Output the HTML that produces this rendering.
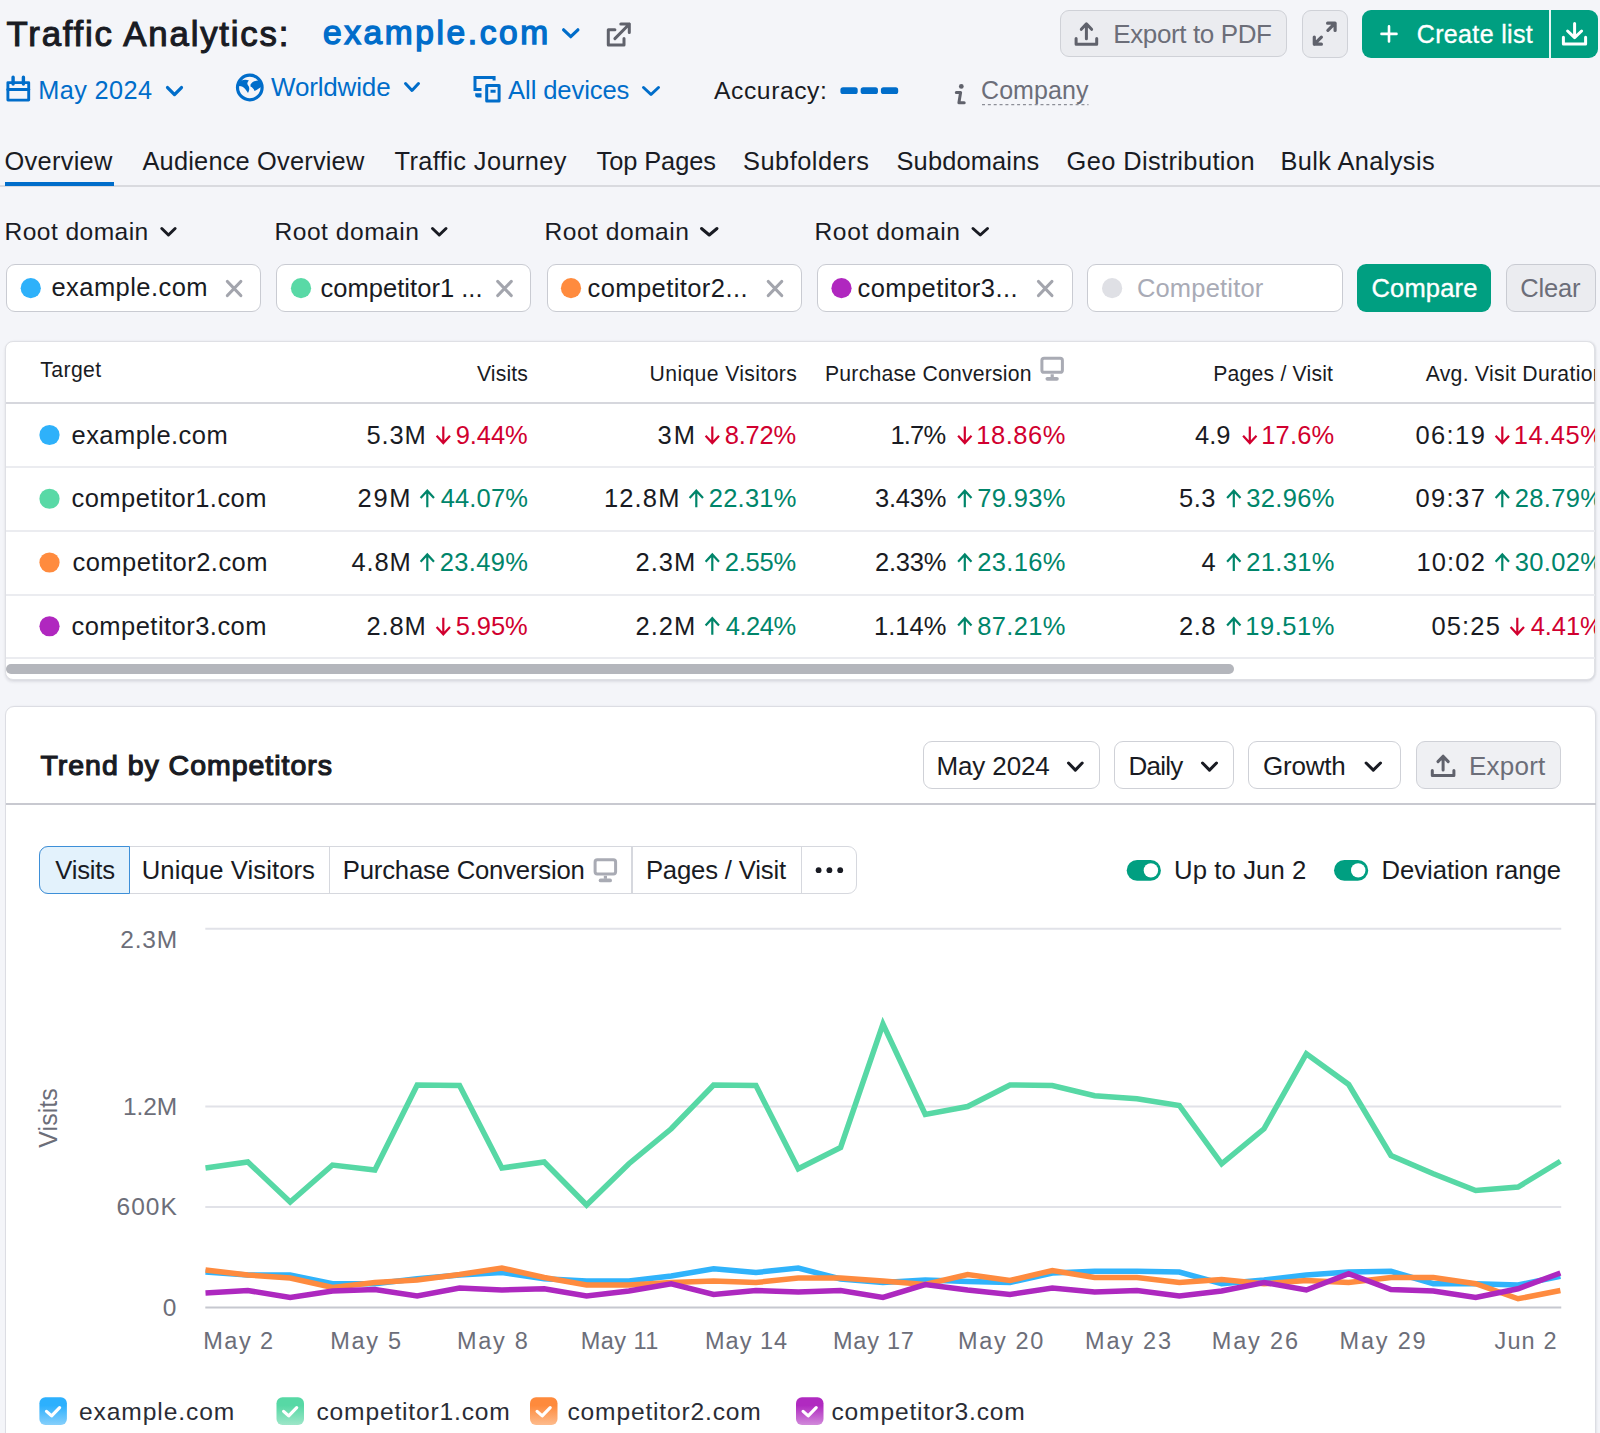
<!DOCTYPE html>
<html><head><meta charset="utf-8"><title>Traffic Analytics</title>
<style>
html,body{margin:0;padding:0}
body{width:1600px;height:1433px;overflow:hidden;background:#f4f5f9;position:relative;font-family:'Liberation Sans', sans-serif}
.t{position:absolute;white-space:nowrap;line-height:1;font-family:'Liberation Sans', sans-serif}
.a{position:absolute;box-sizing:border-box}
</style></head><body>
<div class="a" style="left:1059.60px;top:10.30px;width:227.60px;height:47.10px;background:#ebecf0;border:1.5px solid #cfd1d7;border-radius:9px"></div>
<div class="a" style="left:1302.00px;top:10.00px;width:45.80px;height:47.70px;background:#ebecf0;border:1.5px solid #cfd1d7;border-radius:9px"></div>
<div class="a" style="left:1362.25px;top:9.80px;width:235.45px;height:48.00px;background:#009f81;border-radius:9px"></div>
<div class="a" style="left:1548.70px;top:9.80px;width:2.20px;height:48.00px;background:#ffffff;opacity:.9"></div>
<div class="a" style="left:0.00px;top:185.25px;width:1600.00px;height:1.50px;background:#d9dadf"></div>
<div class="a" style="left:5.00px;top:182.00px;width:109.00px;height:4.25px;background:#006dca"></div>
<div class="a" style="left:5.60px;top:264.40px;width:255.00px;height:47.30px;background:#fff;border:1.5px solid #c9cbd2;border-radius:9px"></div>
<div class="a" style="left:275.60px;top:264.40px;width:255.40px;height:47.30px;background:#fff;border:1.5px solid #c9cbd2;border-radius:9px"></div>
<div class="a" style="left:546.50px;top:264.40px;width:255.50px;height:47.30px;background:#fff;border:1.5px solid #c9cbd2;border-radius:9px"></div>
<div class="a" style="left:816.50px;top:264.40px;width:256.00px;height:47.30px;background:#fff;border:1.5px solid #c9cbd2;border-radius:9px"></div>
<div class="a" style="left:1086.50px;top:264.40px;width:256.10px;height:47.30px;background:#fff;border:1.5px solid #c9cbd2;border-radius:9px"></div>
<div class="a" style="left:1357.00px;top:264.20px;width:134.00px;height:47.80px;background:#009f81;border-radius:9px"></div>
<div class="a" style="left:1505.75px;top:264.20px;width:89.75px;height:47.80px;background:#ebecf0;border:1.5px solid #c9cbd2;border-radius:9px"></div>
<div class="a" style="left:4.50px;top:340.80px;width:1590.80px;height:339.00px;background:#fff;border:1.5px solid #dfe0e5;border-radius:8px;box-shadow:0 2px 3px rgba(30,32,45,.10), 1px 0 2px rgba(30,32,45,.08)"></div>
<div class="a" style="left:6.00px;top:402.00px;width:1589.00px;height:2.00px;background:#d6d7dd"></div>
<div class="a" style="left:6.00px;top:466.00px;width:1589.00px;height:2.00px;background:#ebecf0"></div>
<div class="a" style="left:6.00px;top:529.80px;width:1589.00px;height:2.00px;background:#ebecf0"></div>
<div class="a" style="left:6.00px;top:593.60px;width:1589.00px;height:2.00px;background:#ebecf0"></div>
<div class="a" style="left:6.00px;top:657.40px;width:1589.00px;height:2.00px;background:#ebecf0"></div>
<div class="a" style="left:5.50px;top:663.75px;width:1228.90px;height:9.75px;background:#b4b6bc;border-radius:5px"></div>
<div class="a" style="left:4.50px;top:706.30px;width:1591.80px;height:793.70px;background:#fff;border:1.5px solid #dcdde3;border-radius:9px;box-shadow:1px 0 2px rgba(30,32,45,.08)"></div>
<div class="a" style="left:6.00px;top:803.00px;width:1589.50px;height:2.20px;background:#c8c9d0"></div>
<div class="a" style="left:922.70px;top:741.00px;width:177.30px;height:48.00px;background:#fff;border:1.5px solid #cfd1d7;border-radius:9px"></div>
<div class="a" style="left:1114.40px;top:741.00px;width:119.40px;height:48.00px;background:#fff;border:1.5px solid #cfd1d7;border-radius:9px"></div>
<div class="a" style="left:1248.20px;top:741.00px;width:153.10px;height:48.00px;background:#fff;border:1.5px solid #cfd1d7;border-radius:9px"></div>
<div class="a" style="left:1416.00px;top:741.00px;width:144.50px;height:48.00px;background:#eff0f3;border:1.5px solid #cfd1d7;border-radius:9px"></div>
<div class="a" style="left:39.10px;top:846.30px;width:818.30px;height:47.80px;background:#fff;border:1.5px solid #d6d8de;border-radius:9px"></div>
<div class="a" style="left:39.10px;top:846.30px;width:91.40px;height:47.80px;background:#e3f2fc;border:1.5px solid #3d8fd8;border-radius:9px 0 0 9px"></div>
<div class="a" style="left:328.55px;top:847.00px;width:1.50px;height:46.50px;background:#d6d8de"></div>
<div class="a" style="left:631.25px;top:847.00px;width:1.50px;height:46.50px;background:#d6d8de"></div>
<div class="a" style="left:800.95px;top:847.00px;width:1.50px;height:46.50px;background:#d6d8de"></div>
<svg class="a" style="left:0;top:0" width="1600" height="1433" viewBox="0 0 1600 1433"><polyline points="563.60,29.80 570.75,36.70 577.90,29.80" fill="none" stroke="#006dca" stroke-width="3.2" stroke-linecap="round" stroke-linejoin="round" /><path d="M614.9,29.7 H608.3 V45 H624 V38.4" fill="none" stroke="#60626c" stroke-width="3" stroke-linecap="round" stroke-linejoin="round"/><path d="M614.9,38.6 L629.4,24 M620.8,23.9 H629.3 V32.4" fill="none" stroke="#60626c" stroke-width="3" stroke-linecap="round" stroke-linejoin="round"/><path d="M7.9,82.6 H28.7 V100.1 H7.9 Z" fill="none" stroke="#006dca" stroke-width="2.9" stroke-linecap="round" stroke-linejoin="round"/><path d="M7.9,89.4 H28.7" fill="none" stroke="#006dca" stroke-width="3" stroke-linecap="round" stroke-linejoin="round"/><path d="M13.1,77.2 V84 M23.4,77.2 V84" fill="none" stroke="#006dca" stroke-width="3.4" stroke-linecap="round" stroke-linejoin="round"/><circle cx="249.8" cy="87.5" r="12.3" fill="none" stroke="#006dca" stroke-width="3.2"/><path d="M241.5,80.5 C244,79.5 247,79.8 249,80.5 C247.5,82 246.8,83.3 247.8,85 C249.5,87 250,89.5 248,93 C246.5,91 245,88 242,86.5 C240,85.5 238.5,86 238,86.5 C238.5,84 239.5,82 241.5,80.5 Z" fill="#006dca"/><path d="M250.5,84.5 C252,82 255,80.5 258.5,80.5 C260.5,82.5 261.5,84.5 261.5,86.5 C259.5,88 257.5,89.5 254.5,91 C254,89 252.5,87.5 250.5,86.5 Z" fill="#006dca"/><path d="M494.1,80.6 V77.4 H475 V89.4 H481.5" fill="none" stroke="#006dca" stroke-width="3" stroke-linecap="butt" stroke-linejoin="miter"/><path d="M475.2,93.2 H481.5 V97.6 H477.5 Q475.2,97.6 475.2,95.3 Z" fill="#006dca"/><path d="M486.7,85.6 H499.1 V101 H486.7 Z" fill="none" stroke="#006dca" stroke-width="3" stroke-linecap="round" stroke-linejoin="round"/><rect x="490.5" y="89.75" width="5.1" height="3" fill="#006dca"/><polyline points="167.55,87.55 174.50,94.60 181.45,87.55" fill="none" stroke="#006dca" stroke-width="3.3" stroke-linecap="round" stroke-linejoin="round" /><polyline points="405.50,83.50 412.00,90.50 418.50,83.50" fill="none" stroke="#006dca" stroke-width="3" stroke-linecap="round" stroke-linejoin="round" /><polyline points="643.50,87.50 651.00,94.50 658.50,87.50" fill="none" stroke="#006dca" stroke-width="3" stroke-linecap="round" stroke-linejoin="round" /><rect x="840.4" y="87.3" width="17.3" height="6.7" rx="2.6" fill="#006dca"/><rect x="860.65" y="87.3" width="17.3" height="6.7" rx="2.6" fill="#006dca"/><rect x="880.9" y="87.3" width="17.3" height="6.7" rx="2.6" fill="#006dca"/><circle cx="961.3" cy="86.4" r="2.4" fill="#60626c"/><path d="M956.3,92.4 H960.6 L958.9,102.7 H964.2" fill="none" stroke="#60626c" stroke-width="3" stroke-linecap="round" stroke-linejoin="round"/><line x1="982" y1="104.6" x2="1088.5" y2="104.6" stroke="#8d8f98" stroke-width="1.4" stroke-dasharray="3 2.85"/><path d="M1086.4,24 V38.8 M1081.3,29.3 L1086.4,23.9 L1091.6,29.3" fill="none" stroke="#60626c" stroke-width="3" stroke-linecap="round" stroke-linejoin="round"/><path d="M1076.1,38.4 V44.2 H1096.7 V38.4" fill="none" stroke="#60626c" stroke-width="3" stroke-linecap="round" stroke-linejoin="round"/><path d="M1327.6,23.2 H1335.1 V30.5 M1335.1,23.2 L1327.9,30.4" fill="none" stroke="#60626c" stroke-width="3.2" stroke-linecap="round" stroke-linejoin="round"/><path d="M1321.4,37.1 L1314.3,44.2 M1314.3,37.1 V44.2 H1321.4" fill="none" stroke="#60626c" stroke-width="3.2" stroke-linecap="round" stroke-linejoin="round"/><path d="M1381.5,33.9 H1396.5 M1389,26.4 V41.4" fill="none" stroke="#fff" stroke-width="2.6" stroke-linecap="round" stroke-linejoin="round"/><path d="M1574.6,23.5 V37 M1567.6,31 L1574.6,37.6 L1581.6,31" fill="none" stroke="#fff" stroke-width="3" stroke-linecap="round" stroke-linejoin="round"/><path d="M1563.4,37.2 V44 H1585.6 V37.2" fill="none" stroke="#fff" stroke-width="3" stroke-linecap="round" stroke-linejoin="round"/><polyline points="161.80,228.50 168.45,235.00 175.10,228.50" fill="none" stroke="#191b23" stroke-width="3" stroke-linecap="round" stroke-linejoin="round" /><polyline points="432.50,228.50 439.25,235.00 446.00,228.50" fill="none" stroke="#191b23" stroke-width="3" stroke-linecap="round" stroke-linejoin="round" /><polyline points="701.50,228.50 709.25,235.00 717.00,228.50" fill="none" stroke="#191b23" stroke-width="3" stroke-linecap="round" stroke-linejoin="round" /><polyline points="973.00,228.50 980.25,235.00 987.50,228.50" fill="none" stroke="#191b23" stroke-width="3" stroke-linecap="round" stroke-linejoin="round" /><circle cx="30.75" cy="288.2" r="10.1" fill="#2eb1fa"/><path d="M227.4,281.5 L240.79999999999998,295.5 M240.79999999999998,281.5 L227.4,295.5" fill="none" stroke="#a3a5ad" stroke-width="3.2" stroke-linecap="round" stroke-linejoin="round"/><circle cx="301" cy="288.2" r="10.1" fill="#59d9a6"/><path d="M497.8,281.5 L511.2,295.5 M511.2,281.5 L497.8,295.5" fill="none" stroke="#a3a5ad" stroke-width="3.2" stroke-linecap="round" stroke-linejoin="round"/><circle cx="571" cy="288.2" r="10.1" fill="#ff8b3e"/><path d="M768.3,281.5 L781.7,295.5 M781.7,281.5 L768.3,295.5" fill="none" stroke="#a3a5ad" stroke-width="3.2" stroke-linecap="round" stroke-linejoin="round"/><circle cx="841.5" cy="288.2" r="10.1" fill="#b027bf"/><path d="M1038.5,281.5 L1051.9,295.5 M1051.9,281.5 L1038.5,295.5" fill="none" stroke="#a3a5ad" stroke-width="3.2" stroke-linecap="round" stroke-linejoin="round"/><circle cx="1112.1" cy="288.2" r="10.1" fill="#dfe0e5"/><rect x="1041.9" y="358.25" width="20.5" height="14.1" rx="2.2" fill="none" stroke="#a9abb4" stroke-width="3"/><rect x="1050.6000000000001" y="374.25" width="3.2" height="3" fill="#a9abb4"/><rect x="1045.5" y="376.95" width="13.3" height="3.8" rx="1.9" fill="#a9abb4"/><rect x="595.1" y="859.8" width="20.5" height="14.1" rx="2.2" fill="none" stroke="#a9abb4" stroke-width="3"/><rect x="603.8000000000001" y="875.8" width="3.2" height="3" fill="#a9abb4"/><rect x="598.7" y="878.5" width="13.3" height="3.8" rx="1.9" fill="#a9abb4"/><circle cx="49.5" cy="435.00" r="10.1" fill="#2eb1fa"/><circle cx="49.5" cy="498.75" r="10.1" fill="#59d9a6"/><circle cx="49.5" cy="562.50" r="10.1" fill="#ff8b3e"/><circle cx="49.5" cy="626.25" r="10.1" fill="#b027bf"/><polyline points="1068.50,763.00 1075.35,770.10 1082.20,763.00" fill="none" stroke="#191b23" stroke-width="3" stroke-linecap="round" stroke-linejoin="round" /><polyline points="1202.50,763.00 1209.50,770.10 1216.50,763.00" fill="none" stroke="#191b23" stroke-width="3" stroke-linecap="round" stroke-linejoin="round" /><polyline points="1366.10,763.00 1373.30,770.10 1380.50,763.00" fill="none" stroke="#191b23" stroke-width="3" stroke-linecap="round" stroke-linejoin="round" /><path d="M1443.1,757 V770 M1438,761.6 L1443.1,756.2 L1448.2,761.6" fill="none" stroke="#60626c" stroke-width="3" stroke-linecap="round" stroke-linejoin="round"/><path d="M1432.3,770.5 V775.4 H1453.9 V770.5" fill="none" stroke="#60626c" stroke-width="3" stroke-linecap="round" stroke-linejoin="round"/><circle cx="818.6" cy="870.2" r="2.9" fill="#191b23"/><circle cx="829.4" cy="870.2" r="2.9" fill="#191b23"/><circle cx="840.2" cy="870.2" r="2.9" fill="#191b23"/><rect x="1126.7" y="860" width="34.2" height="20.8" rx="10.4" fill="#009f81"/><circle cx="1150.9" cy="870.4" r="7.2" fill="#fff"/><rect x="1334" y="860" width="34.2" height="20.8" rx="10.4" fill="#009f81"/><circle cx="1358.2" cy="870.4" r="7.2" fill="#fff"/><line x1="205.3" y1="928.75" x2="1561.25" y2="928.75" stroke="#e1e2e8" stroke-width="1.8"/><line x1="205.3" y1="1106.5" x2="1561.25" y2="1106.5" stroke="#e1e2e8" stroke-width="1.8"/><line x1="205.3" y1="1207" x2="1561.25" y2="1207" stroke="#e1e2e8" stroke-width="1.8"/><line x1="205.3" y1="1307.5" x2="1561.25" y2="1307.5" stroke="#c6c8cf" stroke-width="2"/><polyline points="205.50,1272.00 247.84,1275.00 290.18,1275.00 332.52,1283.75 374.86,1283.75 417.20,1278.75 459.54,1275.00 501.88,1272.50 544.22,1278.75 586.56,1281.00 628.90,1281.00 671.24,1276.00 713.58,1268.75 755.92,1272.50 798.26,1268.00 840.60,1279.00 882.94,1282.50 925.28,1280.00 967.62,1281.50 1009.96,1282.50 1052.30,1273.00 1094.64,1271.25 1136.98,1271.25 1179.32,1272.00 1221.66,1283.75 1264.00,1280.00 1306.34,1275.00 1348.68,1272.00 1391.02,1271.25 1433.36,1283.75 1475.70,1283.75 1518.04,1285.00 1560.38,1276.25" fill="none" stroke="#30b3fb" stroke-width="5.5" stroke-linecap="butt" stroke-linejoin="miter" stroke-miterlimit="3"/><polyline points="205.50,1168.00 247.84,1162.00 290.18,1202.00 332.52,1165.00 374.86,1170.00 417.20,1085.00 459.54,1085.50 501.88,1168.00 544.22,1162.00 586.56,1205.00 628.90,1163.75 671.24,1128.75 713.58,1085.00 755.92,1085.50 798.26,1168.75 840.60,1147.50 882.94,1024.00 925.28,1114.50 967.62,1106.50 1009.96,1085.00 1052.30,1085.50 1094.64,1095.75 1136.98,1098.75 1179.32,1105.50 1221.66,1163.75 1264.00,1128.75 1306.34,1053.75 1348.68,1084.50 1391.02,1155.50 1433.36,1173.75 1475.70,1190.50 1518.04,1187.00 1560.38,1161.25" fill="none" stroke="#57d8a5" stroke-width="5.5" stroke-linecap="butt" stroke-linejoin="miter" stroke-miterlimit="3"/><polyline points="205.50,1270.00 247.84,1275.00 290.18,1278.00 332.52,1287.50 374.86,1282.50 417.20,1280.00 459.54,1274.50 501.88,1268.00 544.22,1277.50 586.56,1285.00 628.90,1285.00 671.24,1282.50 713.58,1281.00 755.92,1282.50 798.26,1278.00 840.60,1278.00 882.94,1281.00 925.28,1284.50 967.62,1274.50 1009.96,1280.50 1052.30,1270.50 1094.64,1277.50 1136.98,1277.50 1179.32,1282.50 1221.66,1279.50 1264.00,1283.75 1306.34,1280.50 1348.68,1282.50 1391.02,1277.50 1433.36,1277.50 1475.70,1283.75 1518.04,1298.75 1560.38,1290.50" fill="none" stroke="#fe8b3f" stroke-width="5.5" stroke-linecap="butt" stroke-linejoin="miter" stroke-miterlimit="3"/><polyline points="205.50,1293.00 247.84,1290.50 290.18,1297.50 332.52,1291.00 374.86,1289.50 417.20,1296.00 459.54,1288.00 501.88,1290.00 544.22,1288.75 586.56,1296.00 628.90,1291.00 671.24,1283.75 713.58,1294.50 755.92,1290.50 798.26,1292.00 840.60,1290.50 882.94,1297.50 925.28,1284.50 967.62,1290.00 1009.96,1294.50 1052.30,1288.00 1094.64,1292.00 1136.98,1290.50 1179.32,1296.00 1221.66,1291.00 1264.00,1282.50 1306.34,1290.00 1348.68,1273.75 1391.02,1289.50 1433.36,1291.00 1475.70,1297.50 1518.04,1288.75 1560.38,1273.00" fill="none" stroke="#ad28bf" stroke-width="5.5" stroke-linecap="butt" stroke-linejoin="miter" stroke-miterlimit="3"/><path d="M443.3,426.40000000000003 V443.0 M436.6,435.70000000000005 L443.3,443.0 L450,435.70000000000005" fill="none" stroke="#d1002f" stroke-width="2.2" stroke-linecap="butt" stroke-linejoin="miter"/><path d="M712.3,426.40000000000003 V443.0 M705.6,435.70000000000005 L712.3,443.0 L719,435.70000000000005" fill="none" stroke="#d1002f" stroke-width="2.2" stroke-linecap="butt" stroke-linejoin="miter"/><path d="M964.8,426.40000000000003 V443.0 M958.1,435.70000000000005 L964.8,443.0 L971.5,435.70000000000005" fill="none" stroke="#d1002f" stroke-width="2.2" stroke-linecap="butt" stroke-linejoin="miter"/><path d="M1249.8,426.40000000000003 V443.0 M1243.1,435.70000000000005 L1249.8,443.0 L1256.5,435.70000000000005" fill="none" stroke="#d1002f" stroke-width="2.2" stroke-linecap="butt" stroke-linejoin="miter"/><path d="M1502.3,426.40000000000003 V443.0 M1495.6,435.70000000000005 L1502.3,443.0 L1509,435.70000000000005" fill="none" stroke="#d1002f" stroke-width="2.2" stroke-linecap="butt" stroke-linejoin="miter"/><path d="M427.3,507.35 V490.75 M420.6,498.05 L427.3,490.75 L434,498.05" fill="none" stroke="#00856a" stroke-width="2.2" stroke-linecap="butt" stroke-linejoin="miter"/><path d="M696.3,507.35 V490.75 M689.6,498.05 L696.3,490.75 L703,498.05" fill="none" stroke="#00856a" stroke-width="2.2" stroke-linecap="butt" stroke-linejoin="miter"/><path d="M964.8,507.35 V490.75 M958.1,498.05 L964.8,490.75 L971.5,498.05" fill="none" stroke="#00856a" stroke-width="2.2" stroke-linecap="butt" stroke-linejoin="miter"/><path d="M1233.8,507.35 V490.75 M1227.1,498.05 L1233.8,490.75 L1240.5,498.05" fill="none" stroke="#00856a" stroke-width="2.2" stroke-linecap="butt" stroke-linejoin="miter"/><path d="M1502.3,507.35 V490.75 M1495.6,498.05 L1502.3,490.75 L1509,498.05" fill="none" stroke="#00856a" stroke-width="2.2" stroke-linecap="butt" stroke-linejoin="miter"/><path d="M427.3,571.1 V554.5 M420.6,561.8000000000001 L427.3,554.5 L434,561.8000000000001" fill="none" stroke="#00856a" stroke-width="2.2" stroke-linecap="butt" stroke-linejoin="miter"/><path d="M712.3,571.1 V554.5 M705.6,561.8000000000001 L712.3,554.5 L719,561.8000000000001" fill="none" stroke="#00856a" stroke-width="2.2" stroke-linecap="butt" stroke-linejoin="miter"/><path d="M964.8,571.1 V554.5 M958.1,561.8000000000001 L964.8,554.5 L971.5,561.8000000000001" fill="none" stroke="#00856a" stroke-width="2.2" stroke-linecap="butt" stroke-linejoin="miter"/><path d="M1233.8,571.1 V554.5 M1227.1,561.8000000000001 L1233.8,554.5 L1240.5,561.8000000000001" fill="none" stroke="#00856a" stroke-width="2.2" stroke-linecap="butt" stroke-linejoin="miter"/><path d="M1502.3,571.1 V554.5 M1495.6,561.8000000000001 L1502.3,554.5 L1509,561.8000000000001" fill="none" stroke="#00856a" stroke-width="2.2" stroke-linecap="butt" stroke-linejoin="miter"/><path d="M443.3,617.65 V634.25 M436.6,626.95 L443.3,634.25 L450,626.95" fill="none" stroke="#d1002f" stroke-width="2.2" stroke-linecap="butt" stroke-linejoin="miter"/><path d="M712.3,634.85 V618.25 M705.6,625.5500000000001 L712.3,618.25 L719,625.5500000000001" fill="none" stroke="#00856a" stroke-width="2.2" stroke-linecap="butt" stroke-linejoin="miter"/><path d="M964.8,634.85 V618.25 M958.1,625.5500000000001 L964.8,618.25 L971.5,625.5500000000001" fill="none" stroke="#00856a" stroke-width="2.2" stroke-linecap="butt" stroke-linejoin="miter"/><path d="M1233.8,634.85 V618.25 M1227.1,625.5500000000001 L1233.8,618.25 L1240.5,625.5500000000001" fill="none" stroke="#00856a" stroke-width="2.2" stroke-linecap="butt" stroke-linejoin="miter"/><path d="M1517.3,617.65 V634.25 M1510.6,626.95 L1517.3,634.25 L1524,626.95" fill="none" stroke="#d1002f" stroke-width="2.2" stroke-linecap="butt" stroke-linejoin="miter"/><defs><linearGradient id="g0" x1="0" y1="0" x2="0" y2="1"><stop offset="0.3" stop-color="#2db0fd"/><stop offset="1" stop-color="#86cffb"/></linearGradient><linearGradient id="g1" x1="0" y1="0" x2="0" y2="1"><stop offset="0.3" stop-color="#57d8a5"/><stop offset="1" stop-color="#9de6c8"/></linearGradient><linearGradient id="g2" x1="0" y1="0" x2="0" y2="1"><stop offset="0.3" stop-color="#fe8a3c"/><stop offset="1" stop-color="#fdbb8c"/></linearGradient><linearGradient id="g3" x1="0" y1="0" x2="0" y2="1"><stop offset="0.3" stop-color="#b02ac0"/><stop offset="1" stop-color="#d189da"/></linearGradient></defs><rect x="39.4" y="1397.3" width="27.5" height="27.6" rx="6" fill="url(#g0)"/><polyline points="46.50,1411.40 51.60,1415.90 59.60,1407.60" fill="none" stroke="#fff" stroke-width="3.2" stroke-linecap="round" stroke-linejoin="round" /><rect x="276.5" y="1397.3" width="27.5" height="27.6" rx="6" fill="url(#g1)"/><polyline points="283.60,1411.40 288.70,1415.90 296.70,1407.60" fill="none" stroke="#fff" stroke-width="3.2" stroke-linecap="round" stroke-linejoin="round" /><rect x="530" y="1397.3" width="27.5" height="27.6" rx="6" fill="url(#g2)"/><polyline points="537.10,1411.40 542.20,1415.90 550.20,1407.60" fill="none" stroke="#fff" stroke-width="3.2" stroke-linecap="round" stroke-linejoin="round" /><rect x="796" y="1397.3" width="27.5" height="27.6" rx="6" fill="url(#g3)"/><polyline points="803.10,1411.40 808.20,1415.90 816.20,1407.60" fill="none" stroke="#fff" stroke-width="3.2" stroke-linecap="round" stroke-linejoin="round" /></svg>
<div class="t" style="left:6.50px;top:17.00px;font-size:34.8px;font-weight:400;color:#191b23;letter-spacing:1.794px;-webkit-text-stroke:1.05px #191b23;">Traffic Analytics:</div>
<div class="t" style="left:323.00px;top:15.90px;font-size:33.5px;font-weight:400;color:#006dca;letter-spacing:2.600px;-webkit-text-stroke:1.4px #006dca;">example.com</div>
<div class="t" style="left:1113.30px;top:21.00px;font-size:26px;font-weight:400;color:#6c6e79;letter-spacing:-0.383px;">Export to PDF</div>
<div class="t" style="left:1416.75px;top:21.50px;font-size:25px;font-weight:400;color:#ffffff;letter-spacing:0.350px;-webkit-text-stroke:0.35px #ffffff;">Create list</div>
<div class="t" style="left:38.30px;top:78.00px;font-size:25.3px;font-weight:400;color:#006dca;letter-spacing:0.371px;">May 2024</div>
<div class="t" style="left:271.00px;top:73.90px;font-size:26px;font-weight:400;color:#006dca;letter-spacing:-0.163px;">Worldwide</div>
<div class="t" style="left:508.10px;top:77.75px;font-size:25.6px;font-weight:400;color:#006dca;letter-spacing:-0.110px;">All devices</div>
<div class="t" style="left:714.00px;top:79.40px;font-size:24.7px;font-weight:400;color:#191b23;letter-spacing:0.562px;">Accuracy:</div>
<div class="t" style="left:981.00px;top:77.80px;font-size:25px;font-weight:400;color:#6c6e79;letter-spacing:0.083px;">Company</div>
<div class="t" style="left:4.60px;top:149.00px;font-size:25.4px;font-weight:400;color:#191b23;letter-spacing:0.271px;">Overview</div>
<div class="t" style="left:142.50px;top:149.00px;font-size:25.4px;font-weight:400;color:#191b23;letter-spacing:0.188px;">Audience Overview</div>
<div class="t" style="left:394.50px;top:149.00px;font-size:25.4px;font-weight:400;color:#191b23;letter-spacing:0.393px;">Traffic Journey</div>
<div class="t" style="left:596.50px;top:149.00px;font-size:25.4px;font-weight:400;color:#191b23;letter-spacing:-0.062px;">Top Pages</div>
<div class="t" style="left:743.00px;top:149.00px;font-size:25.4px;font-weight:400;color:#191b23;letter-spacing:0.500px;">Subfolders</div>
<div class="t" style="left:896.50px;top:149.00px;font-size:25.4px;font-weight:400;color:#191b23;letter-spacing:0.167px;">Subdomains</div>
<div class="t" style="left:1066.50px;top:149.00px;font-size:25.4px;font-weight:400;color:#191b23;letter-spacing:0.400px;">Geo Distribution</div>
<div class="t" style="left:1280.50px;top:149.00px;font-size:25.4px;font-weight:400;color:#191b23;letter-spacing:0.375px;">Bulk Analysis</div>
<div class="t" style="left:4.60px;top:219.70px;font-size:24.6px;font-weight:400;color:#191b23;letter-spacing:0.420px;">Root domain</div>
<div class="t" style="left:274.50px;top:219.70px;font-size:24.6px;font-weight:400;color:#191b23;letter-spacing:0.500px;">Root domain</div>
<div class="t" style="left:544.50px;top:219.70px;font-size:24.6px;font-weight:400;color:#191b23;letter-spacing:0.500px;">Root domain</div>
<div class="t" style="left:814.50px;top:219.70px;font-size:24.6px;font-weight:400;color:#191b23;letter-spacing:0.600px;">Root domain</div>
<div class="t" style="left:51.50px;top:275.00px;font-size:25.5px;font-weight:400;color:#191b23;letter-spacing:0.440px;">example.com</div>
<div class="t" style="left:320.50px;top:275.50px;font-size:25.5px;font-weight:400;color:#191b23;letter-spacing:0.036px;">competitor1 ...</div>
<div class="t" style="left:587.50px;top:275.50px;font-size:25.5px;font-weight:400;color:#191b23;letter-spacing:0.423px;">competitor2...</div>
<div class="t" style="left:857.50px;top:275.50px;font-size:25.5px;font-weight:400;color:#191b23;letter-spacing:0.423px;">competitor3...</div>
<div class="t" style="left:1136.90px;top:276.25px;font-size:25.5px;font-weight:400;color:#a9abb6;letter-spacing:0.189px;">Competitor</div>
<div class="t" style="left:1371.50px;top:276.25px;font-size:25.5px;font-weight:400;color:#ffffff;letter-spacing:0.167px;-webkit-text-stroke:0.35px #ffffff;">Compare</div>
<div class="t" style="left:1520.30px;top:276.25px;font-size:25.5px;font-weight:400;color:#6c6e79;letter-spacing:-0.200px;">Clear</div>
<div class="t" style="left:40.30px;top:358.50px;font-size:21.2px;font-weight:400;color:#191b23;letter-spacing:0.400px;">Target</div>
<div class="t" style="left:477.00px;top:362.60px;font-size:21.2px;font-weight:400;color:#191b23;letter-spacing:0.120px;">Visits</div>
<div class="t" style="left:649.60px;top:362.60px;font-size:21.2px;font-weight:400;color:#191b23;letter-spacing:0.364px;">Unique Visitors</div>
<div class="t" style="left:825.00px;top:362.60px;font-size:21.2px;font-weight:400;color:#191b23;letter-spacing:0.222px;">Purchase Conversion</div>
<div class="t" style="left:1213.30px;top:362.60px;font-size:21.2px;font-weight:400;color:#191b23;letter-spacing:0.192px;">Pages / Visit</div>
<div class="t" style="left:71.50px;top:422.60px;font-size:25.5px;font-weight:400;color:#191b23;letter-spacing:0.450px;">example.com</div>
<div class="t" style="left:366.50px;top:422.60px;font-size:25.5px;font-weight:400;color:#191b23;letter-spacing:0.833px;">5.3M</div>
<div class="t" style="left:455.70px;top:422.60px;font-size:25.5px;font-weight:400;color:#d1002f;letter-spacing:-0.050px;">9.44%</div>
<div class="t" style="left:657.50px;top:422.60px;font-size:25.5px;font-weight:400;color:#191b23;letter-spacing:2.000px;">3M</div>
<div class="t" style="left:724.70px;top:422.60px;font-size:25.5px;font-weight:400;color:#d1002f;letter-spacing:-0.175px;">8.72%</div>
<div class="t" style="left:890.50px;top:422.60px;font-size:25.5px;font-weight:400;color:#191b23;letter-spacing:-0.833px;">1.7%</div>
<div class="t" style="left:976.20px;top:422.60px;font-size:25.5px;font-weight:400;color:#d1002f;letter-spacing:0.560px;">18.86%</div>
<div class="t" style="left:1195.00px;top:422.60px;font-size:25.5px;font-weight:400;color:#191b23;letter-spacing:0.000px;">4.9</div>
<div class="t" style="left:1261.20px;top:422.60px;font-size:25.5px;font-weight:400;color:#d1002f;letter-spacing:0.200px;">17.6%</div>
<div class="t" style="left:1415.50px;top:422.60px;font-size:25.5px;font-weight:400;color:#191b23;letter-spacing:1.375px;">06:19</div>
<div class="t" style="left:71.50px;top:486.35px;font-size:25.5px;font-weight:400;color:#191b23;letter-spacing:0.464px;">competitor1.com</div>
<div class="t" style="left:357.50px;top:486.35px;font-size:25.5px;font-weight:400;color:#191b23;letter-spacing:1.750px;">29M</div>
<div class="t" style="left:440.70px;top:486.35px;font-size:25.5px;font-weight:400;color:#00856a;letter-spacing:0.160px;">44.07%</div>
<div class="t" style="left:604.00px;top:486.35px;font-size:25.5px;font-weight:400;color:#191b23;letter-spacing:1.125px;">12.8M</div>
<div class="t" style="left:708.70px;top:486.35px;font-size:25.5px;font-weight:400;color:#00856a;letter-spacing:0.260px;">22.31%</div>
<div class="t" style="left:875.00px;top:486.35px;font-size:25.5px;font-weight:400;color:#191b23;letter-spacing:-0.250px;">3.43%</div>
<div class="t" style="left:977.20px;top:486.35px;font-size:25.5px;font-weight:400;color:#00856a;letter-spacing:0.360px;">79.93%</div>
<div class="t" style="left:1179.00px;top:486.35px;font-size:25.5px;font-weight:400;color:#191b23;letter-spacing:0.500px;">5.3</div>
<div class="t" style="left:1246.20px;top:486.35px;font-size:25.5px;font-weight:400;color:#00856a;letter-spacing:0.360px;">32.96%</div>
<div class="t" style="left:1415.50px;top:486.35px;font-size:25.5px;font-weight:400;color:#191b23;letter-spacing:1.375px;">09:37</div>
<div class="t" style="left:72.50px;top:550.10px;font-size:25.5px;font-weight:400;color:#191b23;letter-spacing:0.464px;">competitor2.com</div>
<div class="t" style="left:351.50px;top:550.10px;font-size:25.5px;font-weight:400;color:#191b23;letter-spacing:0.833px;">4.8M</div>
<div class="t" style="left:439.70px;top:550.10px;font-size:25.5px;font-weight:400;color:#00856a;letter-spacing:0.360px;">23.49%</div>
<div class="t" style="left:635.50px;top:550.10px;font-size:25.5px;font-weight:400;color:#191b23;letter-spacing:1.000px;">2.3M</div>
<div class="t" style="left:724.70px;top:550.10px;font-size:25.5px;font-weight:400;color:#00856a;letter-spacing:-0.175px;">2.55%</div>
<div class="t" style="left:875.00px;top:550.10px;font-size:25.5px;font-weight:400;color:#191b23;letter-spacing:-0.250px;">2.33%</div>
<div class="t" style="left:977.20px;top:550.10px;font-size:25.5px;font-weight:400;color:#00856a;letter-spacing:0.360px;">23.16%</div>
<div class="t" style="left:1201.50px;top:550.10px;font-size:25.5px;font-weight:400;color:#191b23;letter-spacing:0.000px;">4</div>
<div class="t" style="left:1246.20px;top:550.10px;font-size:25.5px;font-weight:400;color:#00856a;letter-spacing:0.360px;">21.31%</div>
<div class="t" style="left:1416.50px;top:550.10px;font-size:25.5px;font-weight:400;color:#191b23;letter-spacing:1.125px;">10:02</div>
<div class="t" style="left:71.50px;top:613.85px;font-size:25.5px;font-weight:400;color:#191b23;letter-spacing:0.464px;">competitor3.com</div>
<div class="t" style="left:366.50px;top:613.85px;font-size:25.5px;font-weight:400;color:#191b23;letter-spacing:0.833px;">2.8M</div>
<div class="t" style="left:455.70px;top:613.85px;font-size:25.5px;font-weight:400;color:#d1002f;letter-spacing:-0.050px;">5.95%</div>
<div class="t" style="left:635.50px;top:613.85px;font-size:25.5px;font-weight:400;color:#191b23;letter-spacing:1.000px;">2.2M</div>
<div class="t" style="left:725.70px;top:613.85px;font-size:25.5px;font-weight:400;color:#00856a;letter-spacing:-0.425px;">4.24%</div>
<div class="t" style="left:874.00px;top:613.85px;font-size:25.5px;font-weight:400;color:#191b23;letter-spacing:0.000px;">1.14%</div>
<div class="t" style="left:977.20px;top:613.85px;font-size:25.5px;font-weight:400;color:#00856a;letter-spacing:0.360px;">87.21%</div>
<div class="t" style="left:1179.00px;top:613.85px;font-size:25.5px;font-weight:400;color:#191b23;letter-spacing:0.500px;">2.8</div>
<div class="t" style="left:1245.20px;top:613.85px;font-size:25.5px;font-weight:400;color:#00856a;letter-spacing:0.560px;">19.51%</div>
<div class="t" style="left:1431.50px;top:613.85px;font-size:25.5px;font-weight:400;color:#191b23;letter-spacing:1.125px;">05:25</div>
<div class="t" style="left:40.50px;top:751.00px;font-size:28.5px;font-weight:400;color:#191b23;letter-spacing:0.974px;-webkit-text-stroke:1.2px #191b23;">Trend by Competitors</div>
<div class="t" style="left:936.50px;top:752.70px;font-size:26px;font-weight:400;color:#191b23;letter-spacing:-0.129px;">May 2024</div>
<div class="t" style="left:1128.50px;top:752.70px;font-size:26px;font-weight:400;color:#191b23;letter-spacing:-0.750px;">Daily</div>
<div class="t" style="left:1263.00px;top:752.70px;font-size:26px;font-weight:400;color:#191b23;letter-spacing:-0.200px;">Growth</div>
<div class="t" style="left:1468.90px;top:752.70px;font-size:26px;font-weight:400;color:#6c6e79;letter-spacing:0.260px;">Export</div>
<div class="t" style="left:55.20px;top:858.20px;font-size:25.7px;font-weight:400;color:#191b23;letter-spacing:-0.200px;">Visits</div>
<div class="t" style="left:141.70px;top:858.20px;font-size:25.7px;font-weight:400;color:#191b23;letter-spacing:0.071px;">Unique Visitors</div>
<div class="t" style="left:342.80px;top:858.20px;font-size:25.7px;font-weight:400;color:#191b23;letter-spacing:-0.200px;">Purchase Conversion</div>
<div class="t" style="left:645.90px;top:858.20px;font-size:25.7px;font-weight:400;color:#191b23;letter-spacing:-0.175px;">Pages / Visit</div>
<div class="t" style="left:1174.00px;top:858.20px;font-size:25.7px;font-weight:400;color:#191b23;letter-spacing:0.100px;">Up to Jun 2</div>
<div class="t" style="left:1381.50px;top:858.20px;font-size:25.7px;font-weight:400;color:#191b23;letter-spacing:-0.036px;">Deviation range</div>
<div class="t" style="left:120.25px;top:928.00px;font-size:24.5px;font-weight:400;color:#6c6e79;letter-spacing:0.783px;">2.3M</div>
<div class="t" style="left:123.00px;top:1095.30px;font-size:24.5px;font-weight:400;color:#6c6e79;letter-spacing:-0.133px;">1.2M</div>
<div class="t" style="left:116.50px;top:1195.20px;font-size:24.5px;font-weight:400;color:#6c6e79;letter-spacing:1.033px;">600K</div>
<div class="t" style="left:162.80px;top:1296.00px;font-size:24.5px;font-weight:400;color:#6c6e79;letter-spacing:0.000px;">0</div>
<div class="t" style="left:203.30px;top:1329.60px;font-size:23.5px;font-weight:400;color:#6c6e79;letter-spacing:1.475px;">May 2</div>
<div class="t" style="left:330.20px;top:1329.60px;font-size:23.5px;font-weight:400;color:#6c6e79;letter-spacing:1.700px;">May 5</div>
<div class="t" style="left:457.00px;top:1329.60px;font-size:23.5px;font-weight:400;color:#6c6e79;letter-spacing:1.700px;">May 8</div>
<div class="t" style="left:580.80px;top:1329.60px;font-size:23.5px;font-weight:400;color:#6c6e79;letter-spacing:0.440px;">May 11</div>
<div class="t" style="left:705.00px;top:1329.60px;font-size:23.5px;font-weight:400;color:#6c6e79;letter-spacing:1.000px;">May 14</div>
<div class="t" style="left:833.00px;top:1329.60px;font-size:23.5px;font-weight:400;color:#6c6e79;letter-spacing:0.760px;">May 17</div>
<div class="t" style="left:958.00px;top:1329.60px;font-size:23.5px;font-weight:400;color:#6c6e79;letter-spacing:1.640px;">May 20</div>
<div class="t" style="left:1085.00px;top:1329.60px;font-size:23.5px;font-weight:400;color:#6c6e79;letter-spacing:1.800px;">May 23</div>
<div class="t" style="left:1211.80px;top:1329.60px;font-size:23.5px;font-weight:400;color:#6c6e79;letter-spacing:1.840px;">May 26</div>
<div class="t" style="left:1339.50px;top:1329.60px;font-size:23.5px;font-weight:400;color:#6c6e79;letter-spacing:1.820px;">May 29</div>
<div class="t" style="left:1494.60px;top:1329.60px;font-size:23.5px;font-weight:400;color:#6c6e79;letter-spacing:1.100px;">Jun 2</div>
<div class="t" style="left:79.00px;top:1399.60px;font-size:24.6px;font-weight:400;color:#2a2c35;letter-spacing:0.900px;">example.com</div>
<div class="t" style="left:316.50px;top:1399.60px;font-size:24.6px;font-weight:400;color:#2a2c35;letter-spacing:0.821px;">competitor1.com</div>
<div class="t" style="left:567.50px;top:1399.60px;font-size:24.6px;font-weight:400;color:#2a2c35;letter-spacing:0.821px;">competitor2.com</div>
<div class="t" style="left:831.50px;top:1399.60px;font-size:24.6px;font-weight:400;color:#2a2c35;letter-spacing:0.821px;">competitor3.com</div>
<div class="a" style="left:0;top:340px;width:1595px;height:340px;overflow:hidden"><div class="a" style="left:0;top:-340px;width:1600px;height:1433px"><div class="t" style="left:1425.70px;top:362.60px;font-size:21.2px;font-weight:400;color:#191b23;letter-spacing:0.294px;">Avg. Visit Duration</div><div class="t" style="left:1513.70px;top:422.60px;font-size:25.5px;font-weight:400;color:#d1002f;letter-spacing:0.560px;">14.45%</div><div class="t" style="left:1514.70px;top:486.35px;font-size:25.5px;font-weight:400;color:#00856a;letter-spacing:0.360px;">28.79%</div><div class="t" style="left:1514.70px;top:550.10px;font-size:25.5px;font-weight:400;color:#00856a;letter-spacing:0.360px;">30.02%</div><div class="t" style="left:1530.70px;top:613.85px;font-size:25.5px;font-weight:400;color:#d1002f;letter-spacing:-0.050px;">4.41%</div></div></div>
<div class="t" style="left:48px;top:1118px;font-size:25px;color:#6c6e79;transform:translate(-50%,-50%) rotate(-90deg);">Visits</div>
</body></html>
